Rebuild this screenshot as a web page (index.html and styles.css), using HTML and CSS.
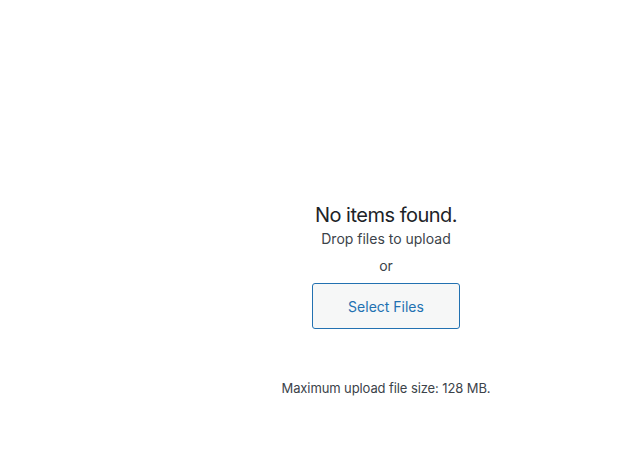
FILE: index.html
```html
<!DOCTYPE html>
<html lang="en">
<head>
<meta charset="UTF-8">
<meta name="viewport" content="width=device-width, initial-scale=1.0">
<title>Media Library</title>
<link rel="stylesheet" href="styles.css">
</head>
<body>
<div class="media-frame">
  <div class="media-sidebar"></div>
  <div class="uploader-inline">
    <h2 class="upload-message">No items found.</h2>
    <p class="drop-instructions">Drop files to upload</p>
    <p class="or">or</p>
    <button class="browser button-hero" type="button">Select Files</button>
    <div class="post-upload-ui">
      <p class="max-upload-size">Maximum upload file size: 128 MB.</p>
    </div>
  </div>
</div>
</body>
</html>
```

FILE: styles.css
```css
body {
  margin: 0;
  background-color: #fff;
  color: #1d2327;
  font-family: Inter, "Noto Sans", sans-serif;
}

.media-frame {
  display: flex;
  height: 456px;
}

.media-sidebar {
  width: 130px;
  flex-shrink: 0;
}

.uploader-inline {
  flex: 1;
  display: flex;
  flex-direction: column;
  align-items: center;
  padding-top: 201px;
}

.upload-message {
  margin: 0;
  font-size: 20px;
  line-height: 28px;
  font-weight: 400;
  letter-spacing: -0.5px;
  color: #1d2327;
}

.drop-instructions {
  margin: 0;
  font-size: 14px;
  line-height: 20px;
  color: #3c434a;
}

.or {
  margin: 7px 0 0;
  font-size: 14px;
  line-height: 20px;
  color: #3c434a;
}

.button-hero {
  margin-top: 7px;
  width: 148px;
  height: 46px;
  padding: 0;
  font-family: inherit;
  font-size: 14px;
  color: #2271b1;
  background-color: #f6f7f7;
  border: 1px solid #2271b1;
  border-radius: 3px;
  cursor: pointer;
}

.post-upload-ui {
  margin-top: 49px;
}

.max-upload-size {
  margin: 0;
  font-size: 13px;
  line-height: 20px;
  letter-spacing: -0.1px;
  color: #3c434a;
}
```
